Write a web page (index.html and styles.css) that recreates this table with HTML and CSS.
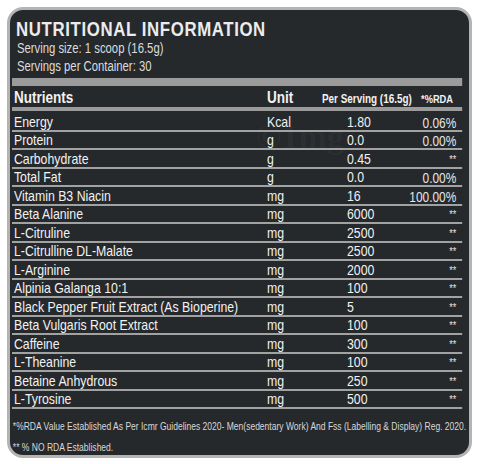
FILE: index.html
```html
<!DOCTYPE html>
<html lang="en">
<head>
    <meta charset="UTF-8">
    <meta name="viewport" content="width=device-width, initial-scale=1.0">
    <title>Nutritional Information</title>
    <link rel="stylesheet" href="styles.css">
</head>
<body>

    <div class="card">
        <!-- o rotulo usa fonte estreita: tudo e desenhado largo e comprimido na horizontal -->
        <div class="conteudo">
            <h1 class="titulo">NUTRITIONAL INFORMATION</h1>
            <p class="info">Serving size: 1 scoop (16.5g)</p>
            <p class="info">Servings per Container: 30</p>
            <div class="barra"></div>

            <div class="tabela">
                <div class="linha cabecalho">
                    <span class="nome">Nutrients</span>
                    <span class="unidade">Unit</span>
                    <span class="valor">Per Serving (16.5g)</span>
                    <span class="rda">*%RDA</span>
                </div>
                <div class="linha"><span class="nome">Energy</span><span class="unidade">Kcal</span><span class="valor">1.80</span><span class="rda">0.06%</span></div>
                <div class="linha"><span class="nome">Protein</span><span class="unidade">g</span><span class="valor">0.0</span><span class="rda">0.00%</span></div>
                <div class="linha"><span class="nome">Carbohydrate</span><span class="unidade">g</span><span class="valor">0.45</span><span class="rda estrela">**</span></div>
                <div class="linha"><span class="nome">Total Fat</span><span class="unidade">g</span><span class="valor">0.0</span><span class="rda">0.00%</span></div>
                <div class="linha"><span class="nome">Vitamin B3 Niacin</span><span class="unidade">mg</span><span class="valor">16</span><span class="rda">100.00%</span></div>
                <div class="linha"><span class="nome">Beta Alanine</span><span class="unidade">mg</span><span class="valor">6000</span><span class="rda estrela">**</span></div>
                <div class="linha"><span class="nome">L-Citruline</span><span class="unidade">mg</span><span class="valor">2500</span><span class="rda estrela">**</span></div>
                <div class="linha"><span class="nome">L-Citrulline DL-Malate</span><span class="unidade">mg</span><span class="valor">2500</span><span class="rda estrela">**</span></div>
                <div class="linha"><span class="nome">L-Arginine</span><span class="unidade">mg</span><span class="valor">2000</span><span class="rda estrela">**</span></div>
                <div class="linha"><span class="nome">Alpinia Galanga 10:1</span><span class="unidade">mg</span><span class="valor">100</span><span class="rda estrela">**</span></div>
                <div class="linha"><span class="nome">Black Pepper Fruit Extract (As Bioperine)</span><span class="unidade">mg</span><span class="valor">5</span><span class="rda estrela">**</span></div>
                <div class="linha"><span class="nome">Beta Vulgaris Root Extract</span><span class="unidade">mg</span><span class="valor">100</span><span class="rda estrela">**</span></div>
                <div class="linha"><span class="nome">Caffeine</span><span class="unidade">mg</span><span class="valor">300</span><span class="rda estrela">**</span></div>
                <div class="linha"><span class="nome">L-Theanine</span><span class="unidade">mg</span><span class="valor">100</span><span class="rda estrela">**</span></div>
                <div class="linha"><span class="nome">Betaine Anhydrous</span><span class="unidade">mg</span><span class="valor">250</span><span class="rda estrela">**</span></div>
                <div class="linha"><span class="nome">L-Tyrosine</span><span class="unidade">mg</span><span class="valor">500</span><span class="rda estrela">**</span></div>
            </div>

            <p class="nota primeira">*%RDA Value Established As Per Icmr Guidelines 2020- Men(sedentary Work) And Fss (Labelling &amp; Display) Reg. 2020.</p>
            <p class="nota">** % NO RDA Established.</p>
        </div>

        <!-- marca d'agua -->
        <span class="marca">©1mg</span>
    </div>

</body>
</html>
```

FILE: styles.css
```css
* { margin: 0; padding: 0; box-sizing: border-box; }
body { background: #fff; font-family: "Liberation Sans", Arial, sans-serif; color: #f2f2f2; }
.card { position: relative; margin: 7px 8px 0 7px; height: 451px; background: #26292c; border: 3px solid #b4b4b4; border-radius: 16px; padding: 8px 7px 0 2px; overflow: hidden; }
.conteudo { width: 548.8px; transform: scaleX(0.82); transform-origin: 0 0; }
.titulo { font-size: 20.5px; line-height: 22px; font-weight: bold; color: #ececec; padding-left: 5px; letter-spacing: 0.75px; }
.info { font-size: 13.8px; line-height: 17.7px; color: #dcdcdc; padding-left: 6px; }
.barra { height: 8px; background: #9b9b9b; margin-top: 2.6px; }
.tabela { display: flex; flex-direction: column; }
.linha { display: grid; grid-template-columns: 311px 97.5px minmax(0, 1fr) 80px; height: 18.5px; padding-top: 0.8px; border-bottom: 2px solid #a2a2a2; font-size: 15px; line-height: 1; align-items: start; }
.cabecalho + .linha { height: 20.7px; padding-top: 3px; }
.linha span { white-space: nowrap; }
.nome { padding-left: 2.4px; }
.rda { text-align: right; padding-right: 7px; font-size: 14.5px; margin-top: 2px; color: #e6e6e6; }
.estrela { font-size: 11px; margin-top: 3px; }
.cabecalho { height: 25px; padding-top: 2.5px; border-bottom: 4px solid #9b9b9b; font-weight: bold; align-items: baseline; }
.cabecalho .nome, .cabecalho .unidade { font-size: 16.5px; }
.cabecalho .valor { font-size: 12.1px; margin-left: -30.5px; }
.cabecalho .rda { font-size: 11.3px; margin-top: 0; padding-right: 11px; color: #f2f2f2; }
.nota { font-size: 10.4px; line-height: 21px; color: #d8d8d8; padding-left: 1px; white-space: nowrap; }
.primeira { margin-top: 6.5px; }
.marca { position: absolute; left: 246px; top: 108px; font-family: "Liberation Serif", serif; font-weight: bold; font-size: 34px; color: rgba(255, 255, 255, 0.035); }
```
